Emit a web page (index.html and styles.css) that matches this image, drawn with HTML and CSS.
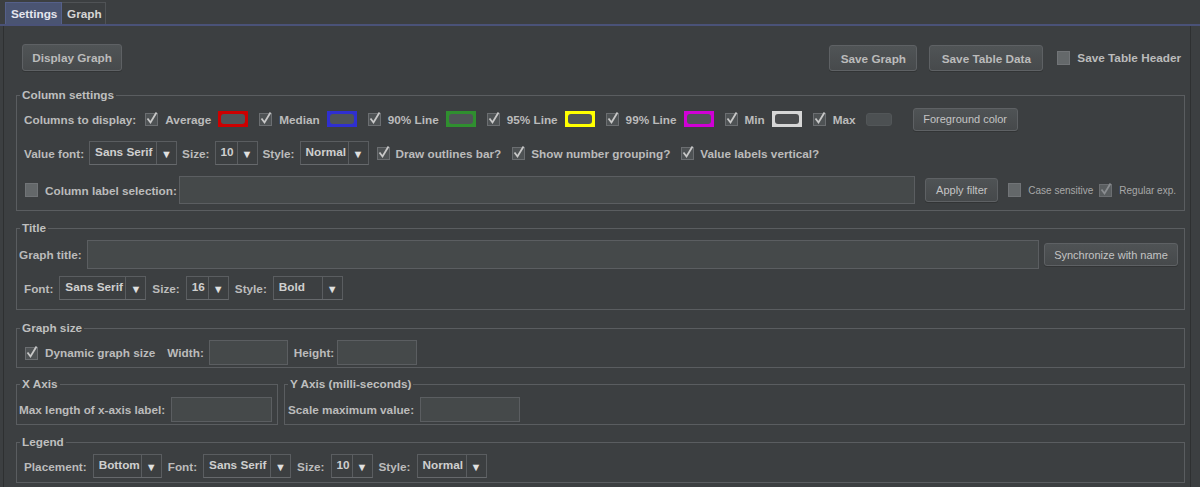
FILE: index.html
```html
<!DOCTYPE html>
<html>
<head>
<meta charset="utf-8">
<link rel="stylesheet" href="styles.css">
</head>
<body>
<div class="tabs">
  <div class="tab active">Settings</div>
  <div class="tab">Graph</div>
</div>
<div class="content">
  <div class="toolbar">
    <button class="btn btn-display">Display Graph</button>
    <div class="spacer"></div>
    <button class="btn btn-save">Save Graph</button>
    <button class="btn btn-table">Save Table Data</button>
    <span class="opt opt-header">
      <svg class="cb" width="13" height="14" viewBox="0 0 13 14"><rect x="0.5" y="0.5" width="12" height="13" fill="#64686a" stroke="#717477"/></svg>
      <span>Save Table Header</span>
    </span>
  </div>

  <fieldset class="fs fs-cols">
    <legend>Column settings</legend>
    <div class="row r-cols">
      <span class="lbl">Columns to display:</span>
      <span class="opt">
        <svg class="cb" width="13" height="14" viewBox="0 0 13 14"><rect x="0.5" y="1.5" width="12" height="12" fill="#4e5254" stroke="#6b6e71"/><path d="M2.5 6.5 L5.5 10.5 L11.5 0.5" stroke="#c8c8c8" stroke-width="1.8" fill="none"/></svg>
        <span>Average</span><span class="sw red"><i></i></span>
      </span>
      <span class="opt">
        <svg class="cb" width="13" height="14" viewBox="0 0 13 14"><rect x="0.5" y="1.5" width="12" height="12" fill="#4e5254" stroke="#6b6e71"/><path d="M2.5 6.5 L5.5 10.5 L11.5 0.5" stroke="#c8c8c8" stroke-width="1.8" fill="none"/></svg>
        <span>Median</span><span class="sw blue"><i></i></span>
      </span>
      <span class="opt">
        <svg class="cb" width="13" height="14" viewBox="0 0 13 14"><rect x="0.5" y="1.5" width="12" height="12" fill="#4e5254" stroke="#6b6e71"/><path d="M2.5 6.5 L5.5 10.5 L11.5 0.5" stroke="#c8c8c8" stroke-width="1.8" fill="none"/></svg>
        <span>90% Line</span><span class="sw green"><i></i></span>
      </span>
      <span class="opt">
        <svg class="cb" width="13" height="14" viewBox="0 0 13 14"><rect x="0.5" y="1.5" width="12" height="12" fill="#4e5254" stroke="#6b6e71"/><path d="M2.5 6.5 L5.5 10.5 L11.5 0.5" stroke="#c8c8c8" stroke-width="1.8" fill="none"/></svg>
        <span>95% Line</span><span class="sw yellow"><i></i></span>
      </span>
      <span class="opt">
        <svg class="cb" width="13" height="14" viewBox="0 0 13 14"><rect x="0.5" y="1.5" width="12" height="12" fill="#4e5254" stroke="#6b6e71"/><path d="M2.5 6.5 L5.5 10.5 L11.5 0.5" stroke="#c8c8c8" stroke-width="1.8" fill="none"/></svg>
        <span>99% Line</span><span class="sw magenta"><i></i></span>
      </span>
      <span class="opt">
        <svg class="cb" width="13" height="14" viewBox="0 0 13 14"><rect x="0.5" y="1.5" width="12" height="12" fill="#4e5254" stroke="#6b6e71"/><path d="M2.5 6.5 L5.5 10.5 L11.5 0.5" stroke="#c8c8c8" stroke-width="1.8" fill="none"/></svg>
        <span>Min</span><span class="sw white"><i></i></span>
      </span>
      <span class="opt">
        <svg class="cb" width="13" height="14" viewBox="0 0 13 14"><rect x="0.5" y="1.5" width="12" height="12" fill="#4e5254" stroke="#6b6e71"/><path d="M2.5 6.5 L5.5 10.5 L11.5 0.5" stroke="#c8c8c8" stroke-width="1.8" fill="none"/></svg>
        <span>Max</span><span class="sw-plain"></span>
      </span>
      <button class="btn-sm btn-fg">Foreground color</button>
    </div>

    <div class="row r-font">
      <span class="lbl">Value font:</span>
      <span class="combo w-font"><span class="combo-text">Sans Serif</span><span class="combo-arrow">&#9660;</span></span>
      <span class="lbl">Size:</span>
      <span class="combo w-size"><span class="combo-text">10</span><span class="combo-arrow">&#9660;</span></span>
      <span class="lbl">Style:</span>
      <span class="combo w-style"><span class="combo-text">Normal</span><span class="combo-arrow">&#9660;</span></span>
      <span class="opt opt-tight">
        <svg class="cb" width="13" height="14" viewBox="0 0 13 14"><rect x="0.5" y="1.5" width="12" height="12" fill="#4e5254" stroke="#6b6e71"/><path d="M2.5 6.5 L5.5 10.5 L11.5 0.5" stroke="#c8c8c8" stroke-width="1.8" fill="none"/></svg>
        <span>Draw outlines bar?</span>
      </span>
      <span class="opt opt-tight">
        <svg class="cb" width="13" height="14" viewBox="0 0 13 14"><rect x="0.5" y="1.5" width="12" height="12" fill="#4e5254" stroke="#6b6e71"/><path d="M2.5 6.5 L5.5 10.5 L11.5 0.5" stroke="#c8c8c8" stroke-width="1.8" fill="none"/></svg>
        <span>Show number grouping?</span>
      </span>
      <span class="opt opt-tight">
        <svg class="cb" width="13" height="14" viewBox="0 0 13 14"><rect x="0.5" y="1.5" width="12" height="12" fill="#4e5254" stroke="#6b6e71"/><path d="M2.5 6.5 L5.5 10.5 L11.5 0.5" stroke="#c8c8c8" stroke-width="1.8" fill="none"/></svg>
        <span>Value labels vertical?</span>
      </span>
    </div>

    <div class="row r-filter">
      <span class="opt">
        <svg class="cb" width="13" height="14" viewBox="0 0 13 14"><rect x="0.5" y="0.5" width="12" height="13" fill="#64686a" stroke="#717477"/></svg>
        <span>Column label selection:</span>
      </span>
      <span class="field f-filter"></span>
      <button class="btn-sm btn-apply">Apply filter</button>
      <span class="opt small">
        <svg class="cb" width="13" height="14" viewBox="0 0 13 14"><rect x="0.5" y="0.5" width="12" height="13" fill="#64686a" stroke="#717477"/></svg>
        <span>Case sensitive</span>
      </span>
      <span class="opt small">
        <svg class="cb" width="13" height="14" viewBox="0 0 13 14"><rect x="0.5" y="1.5" width="12" height="12" fill="#5a5e60" stroke="#6b6e71"/><path d="M2.5 6.5 L5.5 10.5 L11.5 0.5" stroke="#8a8d90" stroke-width="1.8" fill="none"/></svg>
        <span>Regular exp.</span>
      </span>
    </div>
  </fieldset>

  <fieldset class="fs fs-title">
    <legend>Title</legend>
    <div class="row r-title">
      <span class="lbl">Graph title:</span>
      <span class="field f-title"></span>
      <button class="btn-sm btn-sync">Synchronize with name</button>
    </div>
    <div class="row r-tfont">
      <span class="lbl">Font:</span>
      <span class="combo w-font2"><span class="combo-text">Sans Serif</span><span class="combo-arrow">&#9660;</span></span>
      <span class="lbl">Size:</span>
      <span class="combo w-size"><span class="combo-text">16</span><span class="combo-arrow">&#9660;</span></span>
      <span class="lbl">Style:</span>
      <span class="combo w-style2"><span class="combo-text">Bold</span><span class="combo-arrow">&#9660;</span></span>
    </div>
  </fieldset>

  <fieldset class="fs fs-size">
    <legend>Graph size</legend>
    <div class="row r-size">
      <span class="opt">
        <svg class="cb" width="13" height="14" viewBox="0 0 13 14"><rect x="0.5" y="1.5" width="12" height="12" fill="#4e5254" stroke="#6b6e71"/><path d="M2.5 6.5 L5.5 10.5 L11.5 0.5" stroke="#c8c8c8" stroke-width="1.8" fill="none"/></svg>
        <span>Dynamic graph size</span>
      </span>
      <span class="lbl l-width">Width:</span>
      <span class="field f-width"></span>
      <span class="lbl l-height">Height:</span>
      <span class="field f-height"></span>
    </div>
  </fieldset>

  <div class="axes">
    <fieldset class="fs fs-x">
      <legend>X Axis</legend>
      <div class="row r-x">
        <span class="lbl">Max length of x-axis label:</span>
        <span class="field f-x"></span>
      </div>
    </fieldset>
    <fieldset class="fs fs-y">
      <legend>Y Axis (milli-seconds)</legend>
      <div class="row r-y">
        <span class="lbl">Scale maximum value:</span>
        <span class="field f-y"></span>
      </div>
    </fieldset>
  </div>

  <fieldset class="fs fs-legend">
    <legend>Legend</legend>
    <div class="row r-legend">
      <span class="lbl">Placement:</span>
      <span class="combo w-place"><span class="combo-text">Bottom</span><span class="combo-arrow">&#9660;</span></span>
      <span class="lbl">Font:</span>
      <span class="combo w-font"><span class="combo-text">Sans Serif</span><span class="combo-arrow">&#9660;</span></span>
      <span class="lbl">Size:</span>
      <span class="combo w-size3"><span class="combo-text">10</span><span class="combo-arrow">&#9660;</span></span>
      <span class="lbl">Style:</span>
      <span class="combo w-style2"><span class="combo-text">Normal</span><span class="combo-arrow">&#9660;</span></span>
    </div>
  </fieldset>
</div>
</body>
</html>
```

FILE: styles.css
```css
html, body {
  margin: 0;
  padding: 0;
  background: #3c3f41;
}
body {
  font-family: "Liberation Sans", Arial, sans-serif;
  font-size: 11.75px;
  font-weight: bold;
  color: #bbbbbb;
  width: 1200px;
  height: 487px;
  overflow: hidden;
}

/* tabs */
.tabs {
  display: flex;
  align-items: flex-end;
  height: 24px;
  padding-left: 5px;
  border-bottom: 2px solid #4a5278;
}
.tab {
  height: 22px;
  line-height: 21px;
  padding: 0 5px;
  color: #d6d6d6;
  box-sizing: border-box;
  border-top: 1px solid #505356;
  border-right: 1px solid #505356;
}
.tab.active {
  background: #4a5472;
  border-color: #55608a;
  border-left: 1px solid #55608a;
  color: #e4e6ee;
  width: 57px;
}
.tab:not(.active) {
  width: 44px;
}

/* main panel */
.content {
  margin-left: 3px;
  width: 1188px;
  height: 461px;
  box-sizing: border-box;
  border-left: 1px solid #2e3031;
  border-right: 1px solid #2e3031;
  padding: 18px 5px 0 12px;
}

.toolbar {
  display: flex;
  align-items: center;
  height: 27px;
  margin: 0 4px 0 6px;
}
.spacer { flex: 1; }

.btn {
  height: 27px;
  padding: 0;
  white-space: nowrap;
  border: 1px solid #5e6164;
  border-radius: 3px;
  background: linear-gradient(#505456, #474a4c);
  color: #bbbbbb;
  font: bold 11.75px "Liberation Sans", Arial, sans-serif;
  box-shadow: 0 1px 0 #323435;
}
.btn-display { width: 100px; }
.btn-save { width: 88px; height: 26px; margin-top: 1px; }
.btn-table { width: 114px; height: 26px; margin-top: 1px; margin-left: 12px; }
.opt-header { margin-left: 14px; gap: 9px; }

.btn-sm {
  height: 23px;
  padding: 0;
  white-space: nowrap;
  border: 1px solid #5e6164;
  border-radius: 3px;
  background: linear-gradient(#4f5355, #46494b);
  color: #c4c4c4;
  font: 11px "Liberation Sans", Arial, sans-serif;
  box-shadow: 0 1px 0 #323435;
}

/* fieldsets */
.fs {
  margin: 0;
  padding: 0;
  border: 1px solid #5a5d60;
  min-width: 0;
}
.fs legend {
  margin-left: 3px;
  padding: 0 2px;
  line-height: 14px;
  color: #bfbfbf;
}

.row {
  display: flex;
  align-items: center;
}
.lbl { white-space: nowrap; }

.opt {
  display: flex;
  align-items: center;
  gap: 7px;
  white-space: nowrap;
}
.opt-tight { gap: 6px; }
.opt.small {
  font-weight: normal;
  font-size: 10px;
  color: #a8a8a8;
}
.cb { flex: none; display: block; }

/* column settings */
.fs-cols {
  margin-top: 17px;
  padding: 5px 0 6px 0;
}
.r-cols {
  height: 24px;
  padding-left: 7px;
  gap: 11px;
}
.r-cols .lbl { margin-right: -2px; }
.sw {
  display: block;
  width: 30px;
  height: 16px;
  padding: 3px;
  box-sizing: border-box;
}
.sw i {
  display: block;
  height: 100%;
  border-radius: 3px;
  background: #4f5457;
}
.sw.red { background: #cc0000; }
.sw.blue { background: #2f2fd0; }
.sw.green { background: #2f8f2f; }
.sw.yellow { background: #ffff00; }
.sw.magenta { background: #d000d6; }
.sw.white { background: #d6d6d6; }
.sw.white i { background: #4a4c4e; }
.sw-plain {
  display: block;
  width: 24px;
  height: 11px;
  border-radius: 3px;
  background: #4c5052;
  border: 1px solid #525658;
  margin-left: 3px;
}
.btn-fg { width: 105px; margin-left: 10px; }

.r-font {
  height: 24px;
  margin-top: 10px;
  padding-left: 7px;
  gap: 5px;
}
.r-font .opt-tight { margin-left: 3px; }
.r-font .opt-tight + .opt-tight { margin-left: 6px; }

.combo {
  display: flex;
  height: 24px;
  box-sizing: border-box;
  border: 1px solid #5a5d60;
  border-bottom-color: #66696c;
  color: #cfcfcf;
  flex: none;
}
.combo-text {
  flex: 1;
  padding: 1px 0 0 5px;
  line-height: 18px;
  white-space: nowrap;
  overflow: hidden;
}
.combo-arrow {
  width: 19px;
  border-left: 1px solid #5a5d60;
  text-align: center;
  font-size: 11px;
  line-height: 24px;
  color: #e0e0e0;
}
.w-font { width: 88px; }
.w-size { width: 43px; }
.w-style { width: 69px; }
.w-font2 { width: 87px; }
.w-style2 { width: 70px; }
.w-place { width: 69px; }
.w-size3 { width: 42px; }

.field {
  display: block;
  box-sizing: border-box;
  background: #45494a;
  border: 1px solid #5b5e61;
  height: 25px;
  flex: none;
}

.r-filter {
  height: 28px;
  margin-top: 11px;
  padding: 0 8px 0 8px;
}
.f-filter {
  flex: 1;
  height: 28px;
  margin-left: 2px;
}
.btn-apply { width: 73px; height: 24px; margin-left: 10px; }
.r-filter .small { margin-left: 10px; }
.r-filter .small + .small { margin-left: 6px; }

/* title */
.fs-title {
  margin-top: 10px;
  padding: 5px 0 9px 0;
}
.r-title {
  height: 29px;
  padding: 0 6px 0 2px;
}
.f-title {
  flex: 1;
  height: 29px;
  margin-left: 5px;
}
.btn-sync { width: 134px; margin-left: 5px; }
.r-tfont {
  height: 24px;
  margin-top: 7px;
  padding-left: 7px;
  gap: 6px;
}

/* graph size */
.fs-size {
  margin-top: 11px;
  padding: 5px 0 2px 0;
}
.r-size {
  height: 25px;
  padding-left: 8px;
}
.l-width { margin-left: 12px; }
.f-width { width: 79px; margin-left: 5px; }
.l-height { margin-left: 6px; }
.f-height { width: 80px; margin-left: 3px; }

/* axes */
.axes {
  display: flex;
  gap: 6px;
  margin-top: 9px;
}
.fs-x {
  width: 260px;
  flex: none;
  padding: 6px 0 2px 0;
}
.fs-y {
  flex: 1;
  padding: 6px 0 2px 0;
}
.r-x { height: 25px; padding-left: 2px; }
.f-x { width: 101px; margin-left: 6px; }
.r-y { height: 25px; padding-left: 3px; }
.f-y { width: 100px; margin-left: 6px; }

/* legend */
.fs-legend {
  margin-top: 10px;
  padding: 5px 0 4px 0;
}
.r-legend {
  height: 24px;
  padding-left: 7px;
  gap: 6px;
}
```
